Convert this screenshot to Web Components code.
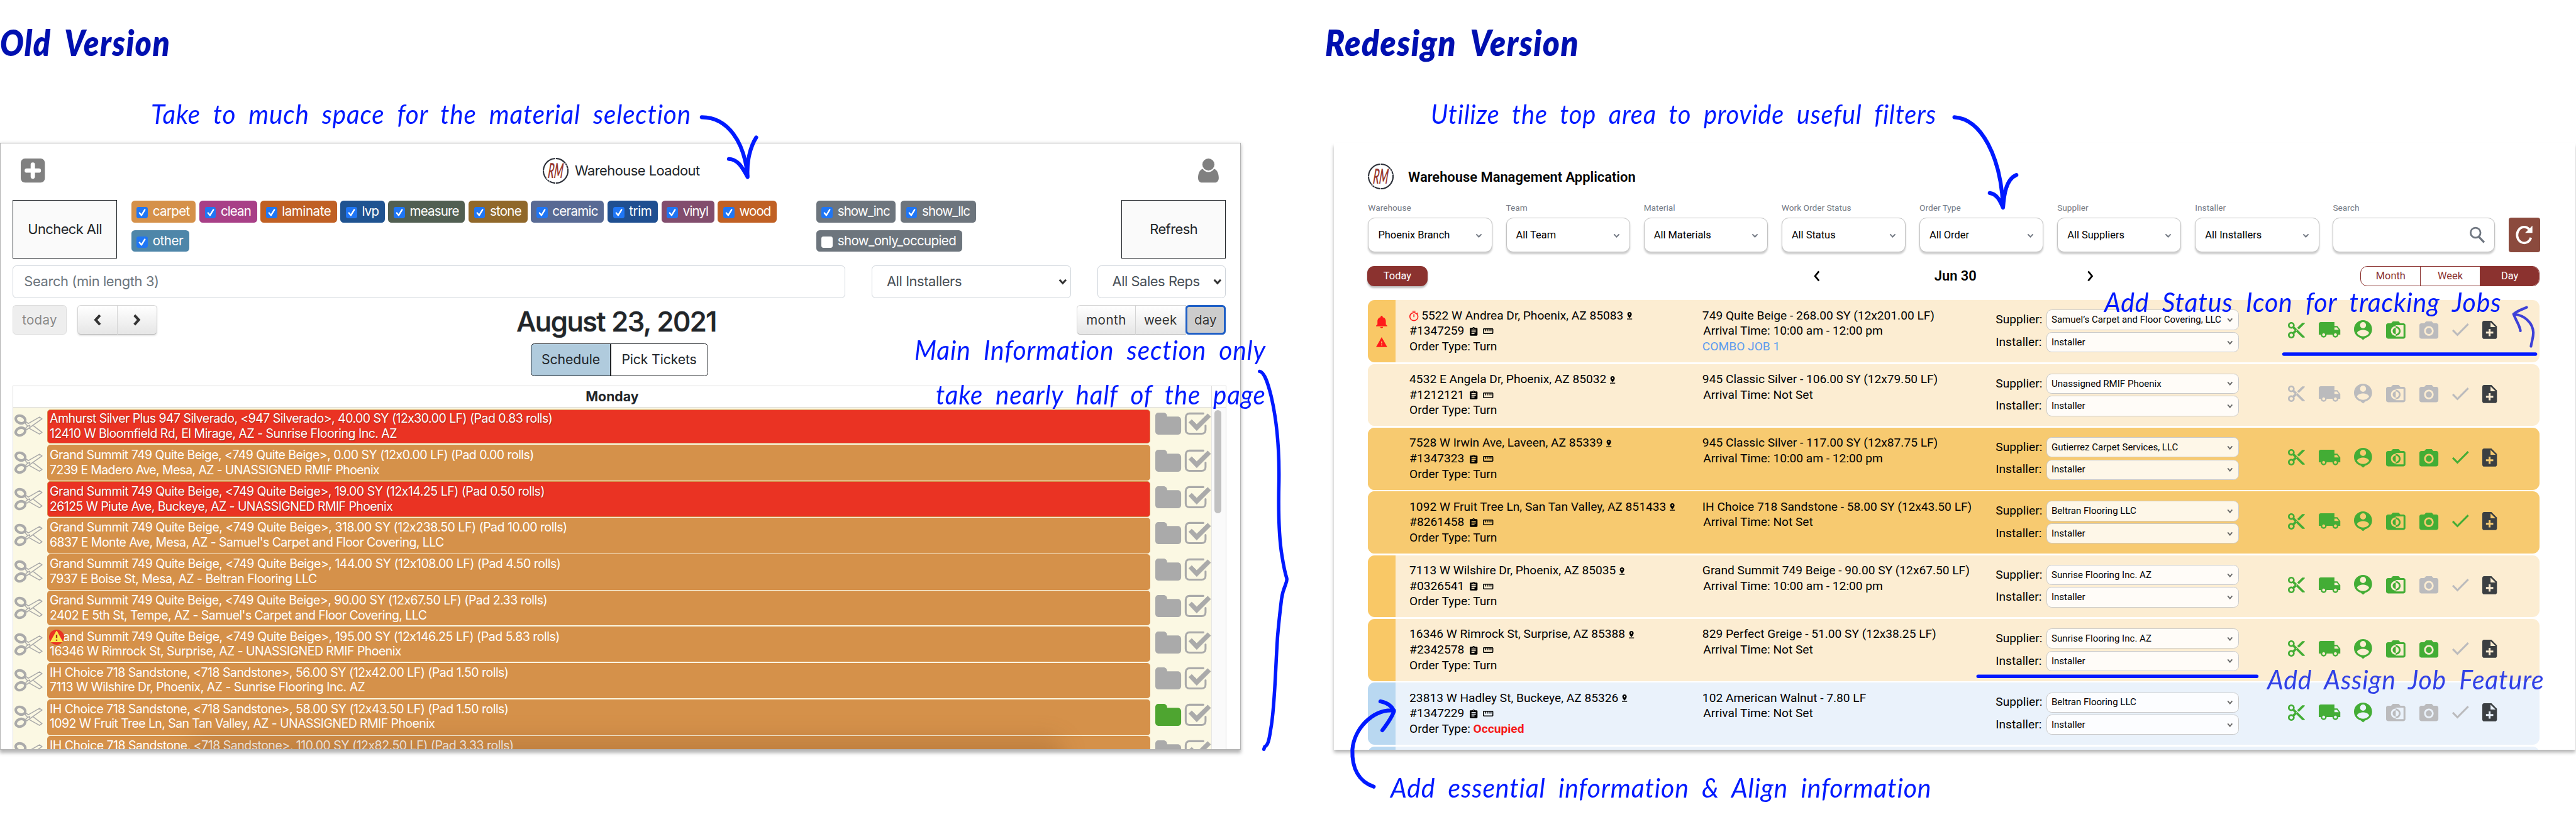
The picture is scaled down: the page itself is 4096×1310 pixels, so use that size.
<!DOCTYPE html>
<html lang="en">
<head>
<meta charset="utf-8">
<title>Warehouse redesign comparison</title>
<style>
html,body{margin:0;padding:0;background:#fff;overflow:hidden}
</style>
</head>
<body>
<compare-board></compare-board>
<script>
const pendingFits = [];
const base = '*{box-sizing:border-box}';
function define(tag, css, html, after) {
  customElements.define(tag, class extends HTMLElement {
    connectedCallback() {
      if (this.shadowRoot) return;
      const r = this.attachShadow({ mode: 'open' });
      r.innerHTML = '<style>' + base + (typeof css === 'function' ? css(this) : css) + '</style>' + (typeof html === 'function' ? html(this) : html);
      if (after) after(this, r);
    }
  });
}
const at = (el, n, d = '') => el.getAttribute(n) ?? d;

/* text that is spaced or stretched to a set width */
define('fit-text', el => `:host{display:block;white-space:nowrap;width:${at(el,'w')}px;flex:none;font-feature-settings:"calt" 0}
  span{display:inline-block;transform-origin:0 50%}`, '<span><slot></slot></span>', el => pendingFits.push(el));
function fitAll() {
  for (const el of pendingFits) {
    const w = +at(el, 'w'), span = el.shadowRoot.querySelector('span');
    const unit = el.getBoundingClientRect().width / w;
    const width = () => span.getBoundingClientRect().width / unit;
    if (el.hasAttribute('stretch')) { span.style.transform = `scaleX(${w / width()})`; continue; }
    if (!el.textContent) continue;
    let gap = 0;
    for (let pass = 0; pass < 4; pass++) {
      gap += (w - width()) / el.textContent.length;
      span.style.letterSpacing = gap + 'px';
    }
  }
}

const ICONS = {
  cut: ['2 2 20 20', '<path d="M9.64 7.64c.23-.5.36-1.05.36-1.64 0-2.21-1.79-4-4-4S2 3.79 2 6s1.79 4 4 4c.59 0 1.14-.13 1.64-.36L10 12l-2.36 2.36C7.14 14.13 6.59 14 6 14c-2.21 0-4 1.79-4 4s1.79 4 4 4 4-1.79 4-4c0-.59-.13-1.14-.36-1.64L12 14l7 7h3v-1L9.64 7.64zM6 8c-1.1 0-2-.89-2-2s.9-2 2-2 2 .89 2 2-.9 2-2 2zm0 12c-1.1 0-2-.89-2-2s.9-2 2-2 2 .89 2 2-.9 2-2 2zm6-7.5c-.28 0-.5-.22-.5-.5s.22-.5.5-.5.5.22.5.5-.22.5-.5.5zM19 3l-6 6 2 2 7-7V3z"/>'],
  truck: ['1 4 22 16', '<path d="M20 8h-3V4H3c-1.1 0-2 .9-2 2v11h2c0 1.66 1.34 3 3 3s3-1.34 3-3h6c0 1.66 1.34 3 3 3s3-1.34 3-3h2v-5l-3-4zM6 18.5c-.83 0-1.5-.67-1.5-1.5s.67-1.5 1.5-1.5 1.5.67 1.5 1.5-.67 1.5-1.5 1.5zm13.5-9l1.96 2.5H17V9.5h2.5zm-1.5 9c-.83 0-1.5-.67-1.5-1.5s.67-1.5 1.5-1.5 1.5.67 1.5 1.5-.67 1.5-1.5 1.5z"/>'],
  person: ['0 0 42 46', '<path fill-rule="evenodd" d="M21 0C9.500 0 0 9.500 0 21c0 9.500 6.500 17.500 15.500 20.300L21 46l5.500-4.700C35.500 38.500 42 30.500 42 21 42 9.500 32.500 0 21 0zM21 4.500a7 7.200 0 1 1 0 14.400a7 7.200 0 0 1 0-14.400zM21 37.500c-6.500 0-11-2.800-14-7.500 0-4.700 9.300-7.500 14-7.500s14 2.800 14 7.500c-3 4.700-7.500 7.500-14 7.500z"/>'],
  camHalf: ['2 3 20 18', '<path d="M20 5h-3.200L15 3H9L7.200 5H4c-1.100 0-2 .9-2 2v12c0 1.100.9 2 2 2h16c1.100 0 2-.9 2-2V7c0-1.100-.9-2-2-2zm0 14h-8v-1c-2.800 0-5-2.200-5-5s2.200-5 5-5V7h8v12zm-3-6c0-2.800-2.200-5-5-5v1.800c1.800 0 3.200 1.400 3.200 3.200s-1.400 3.200-3.200 3.200V18c2.800 0 5-2.200 5-5zm-8.200 0c0 1.800 1.400 3.200 3.200 3.200V9.800c-1.800 0-3.200 1.400-3.200 3.200z"/>'],
  cam: ['2 2 20 18', '<circle cx="12" cy="12" r="3.200"/><path d="M9 2L7.170 4H4c-1.100 0-2 .9-2 2v12c0 1.100.9 2 2 2h16c1.100 0 2-.9 2-2V6c0-1.100-.9-2-2-2h-3.170L15 2H9zm3 15c-2.760 0-5-2.240-5-5s2.240-5 5-5 5 2.240 5 5-2.240 5-5 5z"/>'],
  check: ['3.41 5.59 17.59 13.41', '<path d="M9 16.170L4.830 12l-1.420 1.410L9 19 21 7l-1.410-1.410z"/>'],
  note: ['4 2 16 20', '<path d="M14 2H6c-1.100 0-1.990.9-1.990 2L4 20c0 1.100.89 2 1.990 2H18c1.100 0 2-.9 2-2V8l-6-6zm2 14h-3v3h-2v-3H8v-2h3v-3h2v3h3v2zm-3-7V3.500L18.500 9H13z"/>'],
  bell: ['4 2.5 16 19.5', '<path d="M12 22c1.100 0 2-.9 2-2h-4c0 1.100.89 2 2 2zm6-6v-5c0-3.070-1.640-5.640-4.500-6.320V4c0-.83-.67-1.500-1.500-1.500s-1.500.67-1.500 1.500v.68C7.630 5.360 6 7.920 6 11v5l-2 2v1h16v-1l-2-2z"/>'],
  warn: ['1 2 22 19', '<path d="M1 21h22L12 2 1 21zm12-3h-2v-2h2v2zm0-4h-2v-4h2v4z"/>'],
  timer: ['3 1 18 21', '<path d="M15 1H9v2h6V1zm-4 13h2V8h-2v6zm8.030-6.610l1.420-1.420c-.43-.51-.9-.99-1.410-1.410l-1.420 1.420C16.070 4.740 14.120 4 12 4c-4.970 0-9 4.030-9 9s4.020 9 9 9 9-4.030 9-9c0-2.120-.74-4.070-1.970-5.610zM12 20c-3.870 0-7-3.130-7-7s3.130-7 7-7 7 3.130 7 7-3.130 7-7 7z"/>'],
  clip: ['3 1 18 20', '<path d="M19 3h-4.180C14.400 1.840 13.300 1 12 1c-1.300 0-2.400.84-2.820 2H5c-1.100 0-2 .9-2 2v14c0 1.100.9 2 2 2h14c1.100 0 2-.9 2-2V5c0-1.100-.9-2-2-2zm-7 0c.55 0 1 .45 1 1s-.45 1-1 1-1-.45-1-1 .45-1 1-1zm2 14H7v-2h7v2zm3-4H7v-2h10v2zm0-4H7V7h10v2z"/>'],
  ruler: ['1 6 22 12', '<path d="M21 6H3c-1.100 0-2 .9-2 2v8c0 1.100.9 2 2 2h18c1.100 0 2-.9 2-2V8c0-1.100-.9-2-2-2zm0 10H3V8h2v4h2V8h2v4h2V8h2v4h2V8h2v4h2V8h2v8z"/>'],
  pin: ['5 2 14 20', '<path d="M18 8c0-3.310-2.690-6-6-6S6 4.690 6 8c0 4.500 6 11 6 11s6-6.500 6-11zm-8 0c0-1.100.9-2 2-2s2 .9 2 2-.89 2-2 2c-1.100 0-2-.9-2-2zM5 20v2h14v-2H5z"/>'],
  down: ['0 0 16 10', '<path d="M2 2l6 6 6-6" fill="none" stroke="currentColor" stroke-width="3"/>'],
  downBold: ['0 0 20 14', '<path d="M2.500 2.500l7.500 8 7.500-8" fill="none" stroke="currentColor" stroke-width="4.500"/>'],
  left: ['0 0 14 26', '<path d="M12 2L3 13l9 11" fill="none" stroke="currentColor" stroke-width="4"/>'],
  right: ['0 0 14 26', '<path d="M2 2l9 11-9 11" fill="none" stroke="currentColor" stroke-width="4"/>'],
  leftBold: ['0 0 20 28', '<path d="M16 3L6 14l10 11" fill="none" stroke="currentColor" stroke-width="6"/>'],
  rightBold: ['0 0 20 28', '<path d="M4 3l10 11L4 25" fill="none" stroke="currentColor" stroke-width="6"/>'],
  search: ['0 0 36 40', '<circle cx="13.500" cy="14.500" r="11.500" fill="none" stroke="currentColor" stroke-width="4"/><path d="M21 24l12.500 13" stroke="currentColor" stroke-width="5"/>'],
  redo: ['0 0 40 44', '<path d="M35.500 29A16.500 18.500 0 1 1 31.500 9.500" fill="none" stroke="currentColor" stroke-width="5.500"/><path d="M39 1v17H22z"/>'],
  plus: ['0 0 56 56', '<rect width="56" height="56" rx="10"/><path d="M28 14v28M14 28h28" stroke="#fff" stroke-width="10" stroke-linecap="round"/>'],
  user: ['0 0 48 56', '<ellipse cx="24" cy="14" rx="14" ry="14"/><path d="M11 24c3 5 8 7.500 13 7.500S34 29 37 24c8 2 11 12 11 21 0 7-4 11-9 11H9c-5 0-9-4-9-11 0-9 3-19 11-21z"/>'],
  folder: ['0 0 60 51', '<path d="M8 0h11c5 0 8.500 3.500 8.500 8.500V9H52c5 0 8 3.500 8 8.500V43c0 5-3 8-8 8H8c-5 0-8-3-8-8V8C0 3 3 0 8 0z"/>'],
  square: ['0 0 60 51', '<path d="M43 2H11C5.500 2 2 5.500 2 11v29c0 5.500 3.500 9 9 9h28c5.500 0 9-3.500 9-9V30" fill="none" stroke="currentColor" stroke-width="4.500" stroke-linecap="round"/><path d="M9 22.500l7-6.500 11.500 11.500L53 2.500l7 7L27.500 42z" stroke="currentColor" stroke-linejoin="round"/>'],
  scissors: ['0 0 65 51', '<g fill="none" stroke="currentColor"><ellipse cx="14" cy="11.500" rx="11.500" ry="8.500" transform="rotate(22 14 11.500)" stroke-width="6"/><ellipse cx="14" cy="39.500" rx="11.500" ry="8.500" transform="rotate(-22 14 39.500)" stroke-width="6"/><path stroke-width="2.300" stroke-linejoin="round" d="M25 19.500l3-2 4 3.500 26-15 6 4L33 32l-4 3-3-2 1-3 4-3-4-4zM44 26l20 15.500-6 4L34 32"/></g><circle cx="34.500" cy="26" r="2.300"/>'],
  alert: ['0 0 36 36', '<ellipse cx="18" cy="18" rx="18" ry="18" fill="#ea3323"/><path d="M18 4L32 29H4z" fill="#fbe94e" stroke="#fbe94e" stroke-width="2" stroke-linejoin="round"/><path d="M18 12v8M18 23.500v3" stroke="#a33317" stroke-width="3.500"/>']
};
define('ui-icon', el => `:host{display:block;flex:none;width:${at(el,'w')}px;height:${at(el,'h')}px;color:${at(el,'c','inherit')}}svg{display:block;width:100%;height:100%;overflow:visible;fill:currentColor}`,
  el => { const i = ICONS[at(el, 'name')]; return `<svg viewBox="${i[0]}" preserveAspectRatio="none">${i[1]}</svg>`; });
const icon = (n, w, h, c) => `<ui-icon name="${n}" w="${w}" h="${h}"${c ? ` c="${c}"` : ''}></ui-icon>`;

define('rm-logo', ':host{display:block;flex:none;width:60px;height:60px}svg{display:block;width:100%;height:100%}text{font:italic 600 48px Lato,sans-serif;fill:#96382f}',
  `<svg viewBox="0 0 60 60"><circle cx="30" cy="30" r="28.500" fill="none" stroke="#2b2f38" stroke-width="3" pathLength="360" stroke-dasharray="88 3 29 2 9 2 6 2 38 2 86 3 50 2 9 2 14 2 11 2"/><text x="0" y="0" transform="translate(11 47) skewX(-6) scale(.5 1)">RM</text></svg>`);

/* ---------- previous application ---------- */
define('material-chip', el => `:host{display:flex;align-items:center;gap:11px;flex:none;height:50px;padding-left:13px;border-radius:8px;color:#fff;font-size:30px;background:${at(el,'bg')};width:${at(el,'w')}px}
  i{display:block;width:26px;height:26px;margin-top:5px;border-radius:5px;background:${el.hasAttribute('off') ? '#fff' : '#1f76f5'}}svg{display:block;width:26px;height:26px}`,
  el => `<i>${el.hasAttribute('off') ? '' : '<svg viewBox="0 0 26 26"><path d="M7 14l4.500 5.500L19.500 6.500" fill="none" stroke="#fff" stroke-width="3.500" stroke-linecap="round" stroke-linejoin="round"/></svg>'}</i><fit-text w="${+at(el,'w') - 64}"></fit-text>`,
  (el, r) => { r.querySelector('fit-text').textContent = el.textContent; });

define('stock-row', el => `:host{display:flex;height:${at(el,'h')}px;margin-bottom:2px;color:#aaa}
  .cut{width:79px;flex:none;padding:${at(el,'dy')}px 0 0 2px}
  .bar{position:relative;width:2560px;flex:none;border:2px solid #d5904a;border-radius:7px;padding-left:4px;padding-top:${+at(el,'ty') - 19.25}px;background:${el.hasAttribute('red') ? '#ea3323' : '#d5914a'};color:#fff;font-size:28.500px;line-height:34.500px}
  .red{text-shadow:1px 2px 2px rgba(80,20,0,.5)}
  .alert{position:absolute;left:3px;top:${+at(el,'ty') - 19}px}
  .end{display:flex;gap:9px;padding:${+at(el,'dy') - 4}px 0 0 12px}`,
  el => `<div class="cut">${icon('scissors', 65, 51)}</div>
  <div class="bar ${el.hasAttribute('red') ? 'red' : ''}"><fit-text w="${at(el,'w1')}">${el.children[0].innerHTML}</fit-text>${el.children[1].innerHTML ? `<fit-text w="${at(el,'w2')}">${el.children[1].innerHTML}</fit-text>` : ''}${el.hasAttribute('alert') ? `<div class="alert">${icon('alert', 35, 35)}</div>` : ''}</div>
  <div class="end">${icon('folder', 60, 51, el.hasAttribute('go') ? '#4ea530' : '')}${icon('square', 60, 51)}</div>`);

const STOCK = [
  [80, 11.8, 23, 1167, 806, 'Amhurst Silver Plus 947 Silverado, &lt;947 Silverado&gt;, 40.00 SY (12x30.00 LF) (Pad 0.83 rolls)', '12410 W Bloomfield Rd, El Mirage, AZ - Sunrise Flooring Inc. AZ', 'red'],
  [83.5, 16.4, 26, 1124, 765, 'Grand Summit 749 Quite Beige, &lt;749 Quite Beige&gt;, 0.00 SY (12x0.00 LF) (Pad 0.00 rolls)', '7239 E Madero Ave, Mesa, AZ - UNASSIGNED RMIF Phoenix', ''],
  [82.3, 16, 25, 1149, 796, 'Grand Summit 749 Quite Beige, &lt;749 Quite Beige&gt;, 19.00 SY (12x14.25 LF) (Pad 0.50 rolls)', '26125 W Piute Ave, Buckeye, AZ - UNASSIGNED RMIF Phoenix', 'red'],
  [82.7, 14.6, 23.6, 1201, 915, 'Grand Summit 749 Quite Beige, &lt;749 Quite Beige&gt;, 318.00 SY (12x238.50 LF) (Pad 10.00 rolls)', "6837 E Monte Ave, Mesa, AZ - Samuel's Carpet and Floor Covering, LLC", ''],
  [82.8, 15, 23.6, 1186, 620, 'Grand Summit 749 Quite Beige, &lt;749 Quite Beige&gt;, 144.00 SY (12x108.00 LF) (Pad 4.50 rolls)', '7937 E Boise St, Mesa, AZ - Beltran Flooring LLC', ''],
  [81, 14.5, 23.6, 1155, 875, 'Grand Summit 749 Quite Beige, &lt;749 Quite Beige&gt;, 90.00 SY (12x67.50 LF) (Pad 2.33 rolls)', "2402 E 5th St, Tempe, AZ - Samuel's Carpet and Floor Covering, LLC", ''],
  [82.7, 16, 25, 1184, 816, 'Grand Summit 749 Quite Beige, &lt;749 Quite Beige&gt;, 195.00 SY (12x146.25 LF) (Pad 5.83 rolls)', '16346 W Rimrock St, Surprise, AZ - UNASSIGNED RMIF Phoenix', 'alert'],
  [82.7, 14.5, 23.6, 1065, 732, 'IH Choice 718 Sandstone, &lt;718 Sandstone&gt;, 56.00 SY (12x42.00 LF) (Pad 1.50 rolls)', '7113 W Wilshire Dr, Phoenix, AZ - Sunrise Flooring Inc. AZ', ''],
  [83, 14.8, 23.6, 1065, 894, 'IH Choice 718 Sandstone, &lt;718 Sandstone&gt;, 58.00 SY (12x43.50 LF) (Pad 1.50 rolls)', '1092 W Fruit Tree Ln, San Tan Valley, AZ - UNASSIGNED RMIF Phoenix', 'go'],
  [83, 14.8, 23.6, 1077, 10, 'IH Choice 718 Sandstone, &lt;718 Sandstone&gt;, 110.00 SY (12x82.50 LF) (Pad 3.33 rolls)', '', '']
];
const CHIPS = [['carpet',150,'#d5914a'],['clean',134,'#a83f87'],['laminate',178,'#c06024'],['lvp',103,'#1f5391'],['measure',178,'#515f52'],['stone',137,'#90682a'],['ceramic',170,'#586a94'],['trim',117,'#1f4f91'],['vinyl',123,'#824d6d'],['wood',137,'#c06024'],['other',135,'#4e86a9']];

define('old-app', `:host{display:block;position:relative;width:2880px;height:1408px;border:2px solid #b3b3b3;background:#fff;overflow:hidden;font-family:Inter,"Liberation Sans",sans-serif;color:#212529;font-size:32px;line-height:1.1}
  .row{display:flex}
  .head{height:126px;margin:0 50px 5px 46px;align-items:center;justify-content:space-between;color:#808080}
  .brand{display:flex;align-items:center;gap:15px;color:#212529}
  .tools{height:135px;padding:0 33px 0 28px}
  .big{display:flex;align-items:center;justify-content:center;width:242px;height:135px;border:2.500px solid #212529;background:#fafafa}
  .chips{display:flex;flex-wrap:wrap;align-content:flex-start;gap:18px 8px;padding-top:2px}
  .mat{width:1520px;margin-left:33px}.show{width:400px;margin-left:70px;column-gap:11px}
  .tools .big:last-child{margin-left:auto}
  .field{display:flex;align-items:center;justify-content:space-between;height:76px;border:2.500px solid #ced4da;border-radius:9px;padding:0 8px 0 33px;color:#495057;background:#fff}
  .search{margin:16px 33px 0 28px;justify-content:space-between}
  .cal{display:grid;grid-template-columns:1fr auto 1fr;grid-template-rows:69px;align-items:center;height:69px;margin:17px 33px 0 28px}
  .btns{display:flex;height:69px;border-radius:8px}
  .b{display:flex;align-items:center;justify-content:center;height:69px;border:2px solid #d4d4d4;border-bottom-color:#bbb;background:linear-gradient(#fff,#e6e6e6);color:#333;font-size:30px;text-shadow:0 2px 2px rgba(255,255,255,.75)}
  .pair{box-shadow:0 2px 4px rgba(0,0,0,.1)}
  .b+.b{margin-left:-2px}.b:first-child{border-radius:8px 0 0 8px}.b:last-child{border-radius:0 8px 8px 0}
  .today{border-radius:8px!important;background:#eee;color:#888;border-color:#ddd;margin-right:25px}
  .day{background:#ccc;border:4.500px solid #1f5fc6;border-radius:8px!important}
  .title{font-size:64px;line-height:60px;font-weight:500;margin-right:13px;padding-top:9px;-webkit-text-stroke:.8px #212529}
  .tabs{height:76px;margin:20px 0 21px;justify-content:center;font-size:31px;padding-right:5px}
  .tab{display:flex;align-items:center;justify-content:center;height:76px;border:2.500px solid #212529}
  .tab:first-child{width:187px;background:#b0cbdd;border-radius:8px 0 0 8px}.tab:last-child{width:227px;border-radius:0 8px 8px 0;margin-left:-2px}
  .table{margin-left:28px;width:2817px;border:2px solid #ddd;border-bottom:0}
  .th{height:50px;border-bottom:2.500px solid #ddd;align-items:center;font-weight:700;font-size:31px}
  .th div{width:2782px;height:48px;display:flex;justify-content:center;align-items:center;border-right:2px solid #ddd}
  .body{height:800px}
  .list{width:2783px;background:#fbf8e3;padding-top:4px;border-right:2px solid #e6e6e6}
  .track{flex:1;background:#fafafa;padding:6px 0 0 5px}.thumb{width:17px;height:239px;border-radius:9px;background:#c1c1c1}
  .shade{position:absolute;left:430px;width:2040px;bottom:-64px;height:90px;border-radius:45px;background:rgba(120,70,30,.24);filter:blur(26px)}`,
  `<div class="row head">${icon('plus',56,56)}<div class="brand"><rm-logo></rm-logo><fit-text w="290">Warehouse Loadout</fit-text></div>${icon('user',48,56)}</div>
  <div class="row tools"><div class="big"><fit-text w="172">Uncheck All</fit-text></div>
    <div class="chips mat">${CHIPS.map(c => `<material-chip w="${c[1]}" bg="${c[2]}">${c[0]}</material-chip>`).join('')}</div>
    <div class="chips show"><material-chip w="185" bg="#6d757d">show_inc</material-chip><material-chip w="175" bg="#6d757d">show_llc</material-chip><material-chip w="339" bg="#6d757d" off>show_only_occupied</material-chip></div>
    <div class="big"><fit-text w="111">Refresh</fit-text></div></div>
  <div class="row search"><div class="field" style="width:1933px;padding-left:25px;color:#6c757d"><fit-text w="313">Search (min length 3)</fit-text></div>
    <div class="field" style="width:462px;margin-right:0"><fit-text w="174">All Installers</fit-text>${icon('downBold',20,14,'#333')}</div>
    <div class="field" style="width:298px"><fit-text w="203">All Sales Reps</fit-text>${icon('downBold',20,14,'#333')}</div></div>
  <div class="cal"><div class="row"><div class="btns"><div class="b today" style="width:125px"><fit-text w="81">today</fit-text></div></div><div class="btns pair"><div class="b" style="width:94px">${icon('leftBold',20,28,'#333')}</div><div class="b" style="width:93px">${icon('rightBold',20,28,'#333')}</div></div></div>
    <div class="title"><fit-text w="464">August 23, 2021</fit-text></div>
    <div class="row" style="justify-content:flex-end"><div class="btns"><div class="b" style="width:137px"><fit-text w="93">month</fit-text></div><div class="b" style="width:119px"><fit-text w="77">week</fit-text></div><div class="b day" style="width:94px"><fit-text w="52">day</fit-text></div></div></div></div>
  <div class="row tabs"><div class="tab"><fit-text w="136">Schedule</fit-text></div><div class="tab"><fit-text w="174">Pick Tickets</fit-text></div></div>
  <div class="table"><div class="row th"><div><fit-text w="123">Monday</fit-text></div></div>
    <div class="row body"><div class="list">${STOCK.map(s => `<stock-row h="${s[0]}" dy="${s[1]}" ty="${s[2]}" w1="${s[3]}" w2="${s[4]}" ${s[7]}><p>${s[5]}</p><p>${s[6]}</p></stock-row>`).join('')}</div><div class="track"><div class="thumb"></div></div></div></div>
  <div class="shade"></div>`);

/* ---------- redesigned application ---------- */
define('filter-box', `:host{display:block;width:288px;flex:none}
  label{display:block;height:24px;line-height:24px;font-size:20px;color:#757b85;margin-bottom:11px}
  div{display:flex;align-items:center;justify-content:space-between;height:80px;padding:0 21px 0 22px;border:2px solid #c2c2c2;border-radius:16px;font-size:24px;box-shadow:0 3px 4px rgba(0,0,0,.2);background:#fff;padding-top:2px}`,
  el => `<label>${at(el,'label')}</label><div><span>${at(el,'value')}</span>${el.hasAttribute('find') ? icon('search',36,40,'#6f7680') : icon('down',16,10,'#757b85')}</div>`);

define('pick-field', `:host{display:flex;align-items:center;height:47px;margin-bottom:5px}
  b{font-weight:400;width:118px;font-size:28px}
  div{display:flex;align-items:center;justify-content:space-between;width:447px;height:47px;padding:0 12px 0 10px;border:1.500px solid #c9c9c9;border-radius:12px;background:rgba(255,255,255,.84);font-size:22px}`,
  el => `<b>${at(el,'label')}</b><div><span>${at(el,'value')}</span>${icon('down',14,10,'#666')}</div>`);

define('job-card', el => `:host{display:flex;height:144px;margin-bottom:4px;border-radius:16px;overflow:hidden;font-size:28px;line-height:36px;background:${at(el,'bg')};white-space:nowrap}
  .strip{display:flex;flex-direction:column;align-items:center;width:64px;flex:none;gap:21px;padding-top:36px;background:${at(el,'strip')}}
  .place{width:712px;padding:18px 0 0 32px}.goods{width:681px;padding-top:18px}
  .line{display:flex;align-items:center;height:36px}
  .line+.line .ic{display:flex;align-items:center;gap:12px;margin-left:13px}
  .goods .line:nth-child(2){padding-left:2px}
  .combo{color:#5b9bee}
  .occ{color:#f51a1a;font-weight:700;margin-left:7px}
  .pick{width:679px;padding-top:22px}
  .marks{display:flex;align-items:center;gap:32px;height:138px}`,
  el => {
    const d = JOBS[+at(el, 'i')], G = '#43ad35', N = '#bbbbbd';
    if (!d) return '<div class="strip"></div>';
    const c = k => k < d.on ? G : N;
    return `<div class="strip">${d.alert ? icon('bell',26,29,'#ff1a1a') + icon('warn',26,23,'#ff1a1a') : ''}</div>
    <div class="place"><div class="line">${d.alert ? icon('timer',21,24,'#ff1a1a') + '<span style="width:7px"></span>' : ''}<span>${d.a}</span><span style="width:8px"></span>${icon('pin',12,17)}</div>
      <div class="line"><span>#${d.n}</span><div class="ic">${icon('clip',18,20)}${icon('ruler',24,13)}</div></div>
      <div class="line"><span>Order Type: ${d.occ ? '' : 'Turn'}</span>${d.occ ? '<span class="occ">Occupied</span>' : ''}</div></div>
    <div class="goods"><div class="line">${d.g}</div><div class="line">Arrival Time: ${d.t ? '10:00 am - 12:00 pm' : 'Not Set'}</div>${d.alert ? '<div class="line combo">COMBO JOB 1</div>' : ''}</div>
    <div class="pick"><pick-field label="Supplier:" value="${d.s}"></pick-field><pick-field label="Installer:" value="Installer"></pick-field></div>
    <div class="marks">${icon('cut',39,38,c(0))}${icon('truck',50,36,c(1))}${icon('person',42,46,c(2))}${icon('camHalf',45,40,c(3))}${icon('cam',44,40,c(4))}${icon('check',39,30,c(5))}${icon('note',34,42,'#3b3f42')}</div>`;
  });
const CREAM = '#fcedd2', GOLD = '#f7ca70', TAB = '#f9c866';
const JOBS = [
  { bg: CREAM, st: TAB, alert: 1, a: '5522 W Andrea Dr, Phoenix, AZ 85083', n: '1347259', g: '749 Quite Beige - 268.00 SY (12x201.00 LF)', t: 1, s: 'Samuel’s Carpet and Floor Covering, LLC', on: 4 },
  { bg: CREAM, st: CREAM, a: '4532 E Angela Dr, Phoenix, AZ 85032', n: '1212121', g: '945 Classic Silver - 106.00 SY (12x79.50 LF)', s: 'Unassigned RMIF Phoenix', on: 0 },
  { bg: GOLD, st: GOLD, a: '7528 W Irwin Ave, Laveen, AZ 85339', n: '1347323', g: '945 Classic Silver - 117.00 SY (12x87.75 LF)', t: 1, s: 'Gutierrez Carpet Services, LLC', on: 6 },
  { bg: GOLD, st: GOLD, a: '1092 W Fruit Tree Ln, San Tan Valley, AZ 851433', n: '8261458', g: 'IH Choice 718 Sandstone - 58.00 SY (12x43.50 LF)', s: 'Beltran Flooring LLC', on: 6 },
  { bg: CREAM, st: TAB, a: '7113 W Wilshire Dr, Phoenix, AZ 85035', n: '0326541', g: 'Grand Summit 749 Beige - 90.00 SY (12x67.50 LF)', t: 1, s: 'Sunrise Flooring Inc. AZ', on: 4 },
  { bg: CREAM, st: TAB, a: '16346 W Rimrock St, Surprise, AZ 85388', n: '2342578', g: '829 Perfect Greige - 51.00 SY (12x38.25 LF)', s: 'Sunrise Flooring Inc. AZ', on: 5 },
  { bg: '#eaf2fb', st: '#b9d8f1', occ: 1, a: '23813 W Hadley St, Buckeye, AZ 85326', n: '1347229', g: '102 American Walnut - 7.80 LF', s: 'Beltran Flooring LLC', on: 3 }
];

define('new-app', `:host{display:block;width:2882px;height:1409px;padding:47px 0 0 80px;background:#fff;overflow:hidden;font-family:Roboto,"Liberation Sans",sans-serif;color:#000}
  .row{display:flex;align-items:center}
  .brand{height:60px;gap:33px;font-size:32px;font-weight:600}
  .brand fit-text{padding-top:4px}
  .filters{gap:32px;margin-top:31px;align-items:flex-end}
  .redo{display:flex;align-items:center;justify-content:center;width:73px;height:80px;border-radius:6px;background:#8b4a3d}
  .nav{display:grid;grid-template-columns:1fr 650px 1fr;width:2722px;height:48px;margin:32px 0;margin-left:-2px;font-size:24px}
  .today{display:flex;align-items:center;justify-content:center;width:140px;height:48px;border-radius:16px;background:#8b322f;color:#fff;box-shadow:0 3px 4px rgba(0,0,0,.25)}
  .date{justify-content:space-between;font-size:32px;font-weight:600}
  .date fit-text{margin-left:9px}
  .seg{display:flex;width:416px;height:47px;justify-self:end;border:2px solid #8b322f;border-radius:16px;overflow:hidden;color:#8b322f}
  .seg div{flex:1;display:flex;align-items:center;justify-content:center}
  .seg div+div{border-left:2px solid #8b322f}.seg div:last-child{background:#8b322f;color:#fff}
  .jobs{width:2720px}`,
  `<div class="row brand"><rm-logo></rm-logo><fit-text w="528">Warehouse Management Application</fit-text></div>
  <div class="row filters">${[['Warehouse','Phoenix Branch'],['Team','All Team'],['Material','All Materials'],['Work Order Status','All Status'],['Order Type','All Order'],['Supplier','All Suppliers'],['Installer','All Installers']].map(f => `<filter-box label="${f[0]}" value="${f[1]}"></filter-box>`).join('')}<filter-box label="Search" value="" find style="width:376px"></filter-box><div class="redo">${icon('redo',40,44,'#fff')}</div></div>
  <div class="nav"><div class="today">Today</div><div class="row date">${icon('left',14,26)}<fit-text w="98">Jun 30</fit-text>${icon('right',14,26)}</div><div class="seg"><div>Month</div><div>Week</div><div>Day</div></div></div>
  <div class="jobs">${JOBS.concat([{ bg: '#eaf2fb', st: '#b9d8f1' }]).map((d, i) => `<job-card i="${i < JOBS.length ? i : 99}" bg="${d.bg}" strip="${d.st}"></job-card>`).join('')}</div>`);

/* ---------- annotations ---------- */
define('hand-note', el => `:host{position:absolute;left:${at(el,'x')}px;top:${+at(el,'y') - 61}px;font:italic 400 ${at(el,'s','62')}px/80px Lato,sans-serif;word-spacing:.24em;letter-spacing:.02em;color:${at(el,'c','#001aff')};white-space:nowrap}`,
  el => `<fit-text stretch w="${at(el,'w')}"></fit-text>`, (el, r) => { r.querySelector('fit-text').textContent = el.textContent; });
define('board-heading', el => `:host{display:block;height:332px;padding-top:49px;font:italic 800 82px/100px Lato,sans-serif;word-spacing:.22em;letter-spacing:.03em;color:#0010b0}`,
  el => `<fit-text stretch w="${at(el,'w')}"></fit-text>`, (el, r) => { r.querySelector('fit-text').textContent = el.textContent; });
define('ink-layer', ':host{position:absolute;inset:0}svg{display:block;width:5980px;height:1912px;fill:none;stroke:#001aff;stroke-width:9;stroke-linecap:round;stroke-linejoin:round}',
  `<svg viewBox="0 0 5980 1912">
    <path d="M1629 272C1690 272 1728 330 1735.500 408M1692 369C1712 370 1722 386 1735.500 411C1733 374 1742 340 1755.500 319"/>
    <path d="M4537 272C4600 276 4645 365 4650 480M4619 448C4635 450 4642 464 4650 482C4652 452 4657 416 4681 406"/>
    <path stroke-width="8" d="M2924 862C2936 864 2944 892 2951 920C2965 980 2970 1050 2969 1118C2967 1200 2971 1260 2976 1290C2980 1315 2983 1330 2987 1342C2990 1352 2979 1360 2975 1390C2972 1415 2969 1440 2966 1475C2961 1540 2960 1640 2950 1692C2946 1720 2943 1730 2936 1733L2934 1739"/>
    <path d="M3189 1826C3155 1814 3138 1784 3139.500 1740C3143 1694 3185 1645 3236 1649M3204.500 1628C3224 1632 3232 1640 3236 1651C3229 1670 3217 1684 3209 1695"/>
    <path stroke="#3e41d8" stroke-width="6" d="M5865.500 713.500C5855 718 5845 721 5835 729C5841 745 5850 756 5851 768M5835 729C5862 732 5880 750 5881 772C5881 785 5877 792 5875.500 804"/>
    <path stroke-width="8" d="M5302 822H5886M4592 1570H5239"/>
  </svg>`);

define('compare-board', `:host{display:block;position:relative;zoom:.68495;width:5980px;height:1912px;overflow:hidden;background:#fff}
  .cols{display:flex;gap:196px}
  section{flex:none}
  old-app{box-shadow:0 5px 8px 2px rgba(0,0,0,.3)}
  new-app{margin-left:20px;box-shadow:0 8px 8px rgba(0,0,0,.3)}`,
  `<div class="cols"><section><board-heading w="396">Old Version</board-heading><old-app></old-app></section>
  <section><board-heading w="590">Redesign Version</board-heading><new-app></new-app></section></div>
  <hand-note x="351" y="286" w="1254">Take to much space for the material selection</hand-note>
  <hand-note x="2123" y="834" w="816">Main Information section only</hand-note>
  <hand-note x="2172" y="937" w="766">take nearly half of the page</hand-note>
  <hand-note x="3322" y="286" w="1174">Utilize the top area to provide useful filters</hand-note>
  <hand-note x="4885" y="722" w="922">Add Status Icon for tracking Jobs</hand-note>
  <hand-note x="5263" y="1598" w="643" c="#3141e6">Add Assign Job Feature</hand-note>
  <hand-note x="3228" y="1850" w="1256">Add essential information &amp; Align information</hand-note>
  <ink-layer></ink-layer>`);
fitAll();
</script>
</body>
</html>
